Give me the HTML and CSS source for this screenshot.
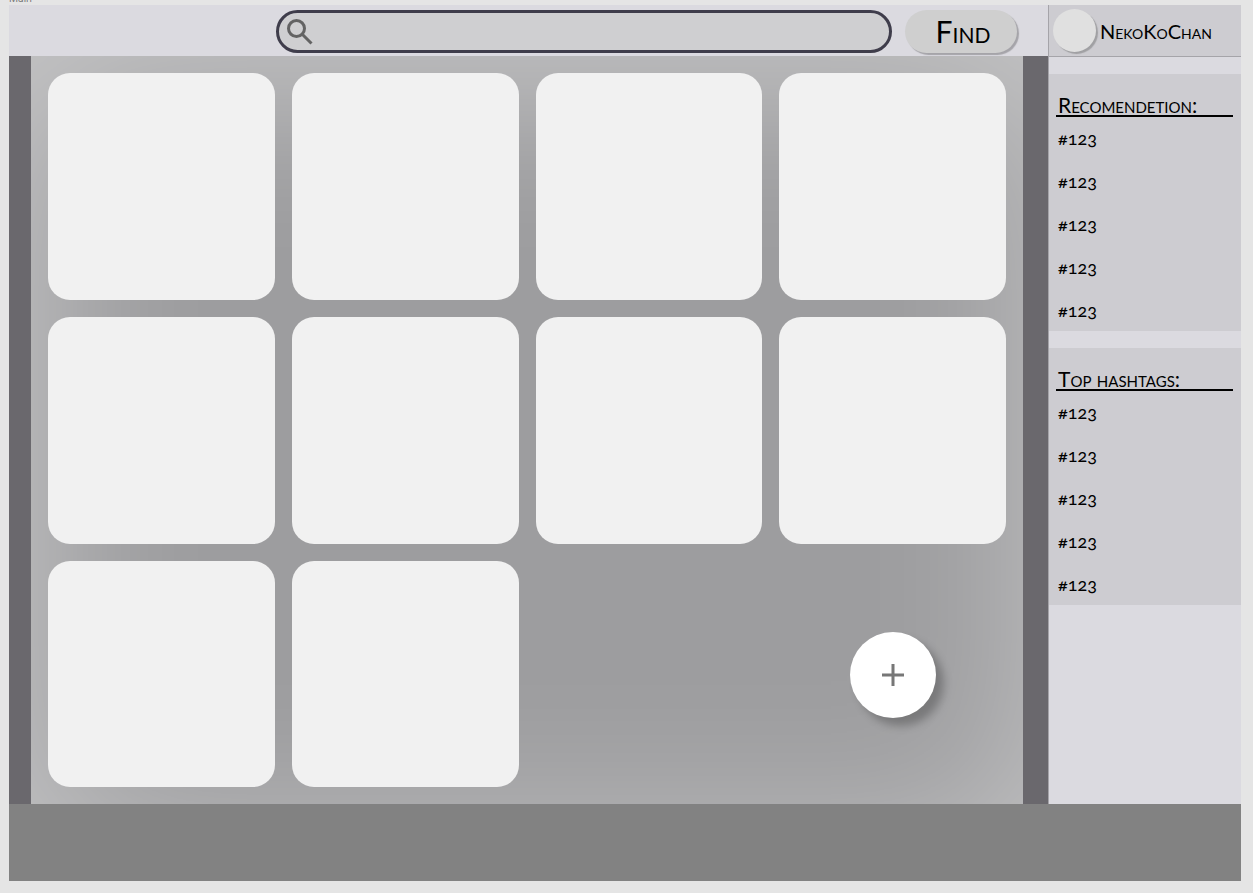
FILE: index.html
```html
<!DOCTYPE html>
<html lang="en">
<head>
<meta charset="utf-8">
<meta name="viewport" content="width=device-width, initial-scale=1">
<title>Main</title>
<link rel="stylesheet" href="styles.css">
</head>
<body>
<span class="frame-label">Main</span>
<div class="frame">
  <div class="layout">
    <div class="main-column">
      <header class="topbar">
        <form class="search" role="search">
          <label class="search-box" aria-label="Search">
            <svg class="search-icon" viewBox="0 0 26 26" aria-hidden="true"><circle cx="9.500" cy="9.500" r="8" /><path d="M15 15L24.500 24.500" /></svg>
            <input class="search-input" type="search" name="q">
          </label>
          <button class="find" type="submit">Find</button>
        </form>
      </header>
      <main class="board">
        <div class="grid">
          <article class="card"></article>
          <article class="card"></article>
          <article class="card"></article>
          <article class="card"></article>
          <article class="card"></article>
          <article class="card"></article>
          <article class="card"></article>
          <article class="card"></article>
          <article class="card"></article>
          <article class="card"></article>
        </div>
        <button class="add" type="button" aria-label="Add"><svg class="add-icon" viewBox="0 0 22 22" aria-hidden="true"><path d="M11 0V22M0 11H22" /></svg></button>
      </main>
    </div>
    <aside class="sidebar">
      <div class="profile"><span class="avatar"></span><span class="name">NekoKoChan</span></div>
      <section class="panel">
        <h2 class="panel-title">Recomendetion:</h2>
        <ul class="tags">
          <li><a href="#">#123</a></li>
          <li><a href="#">#123</a></li>
          <li><a href="#">#123</a></li>
          <li><a href="#">#123</a></li>
          <li><a href="#">#123</a></li>
        </ul>
      </section>
      <section class="panel">
        <h2 class="panel-title">Top hashtags:</h2>
        <ul class="tags">
          <li><a href="#">#123</a></li>
          <li><a href="#">#123</a></li>
          <li><a href="#">#123</a></li>
          <li><a href="#">#123</a></li>
          <li><a href="#">#123</a></li>
        </ul>
      </section>
    </aside>
  </div>
  <footer class="footer"></footer>
</div>
</body>
</html>
```
FILE: styles.css
```css
* { box-sizing: border-box; }

body {
  margin: 0;
  padding: 5px 12px 12px 9px;
  background: #e5e5e5;
  color: #000;
  font-family: Lato, "Open Sans", sans-serif;
  font-variant-caps: small-caps;
  font-variant-numeric: oldstyle-nums;
}

.frame-label {
  position: absolute;
  top: -8px;
  left: 9px;
  color: #777;
  font-family: Inter, sans-serif;
  font-size: 10px;
  line-height: 12px;
  font-variant-caps: normal;
}

.layout {
  display: grid;
  grid-template-columns: minmax(0, 1fr) 193px;
}

.main-column { background: #dbdae0; }

.topbar {
  height: 51px;
  padding: 5px 31px 3px 267px;
}

.search {
  display: flex;
  align-items: flex-start;
  gap: 13px;
}

.search-box {
  display: flex;
  flex: 1;
  align-items: center;
  gap: 8px;
  height: 43px;
  padding: 0 16px 0 8px;
  border: 3px solid #3f3d4b;
  border-radius: 22px;
  background: #cfcfd1;
}

.search-icon {
  width: 26px;
  height: 26px;
  fill: none;
  stroke: #636363;
  stroke-width: 3;
}

.search-input {
  flex: 1;
  min-width: 0;
  border: 0;
  outline: 0;
  background: transparent;
  font: inherit;
  font-size: 20px;
}

.find {
  width: 112px;
  height: 43px;
  padding: 0 0 2px 4px;
  border: 0;
  border-radius: 22px;
  background: #cfcfcf;
  box-shadow: 2px 2px 1px #a5a4a9;
  color: #000;
  font: inherit;
  font-size: 30px;
  line-height: 36px;
}

.board {
  position: relative;
  padding: 17px;
  border: solid #6a686d;
  border-width: 0 25px 0 22px;
  background: #9d9d9f;
  box-shadow: inset 12px 36px 170px rgba(255, 255, 255, .42);
}

.grid {
  display: grid;
  grid-template-columns: repeat(4, minmax(0, 1fr));
  gap: 17px;
}

.card {
  aspect-ratio: 1;
  border-radius: 22px;
  background: #f1f1f1;
}

.add {
  position: absolute;
  right: 87px;
  bottom: 86px;
  display: grid;
  place-items: center;
  width: 86px;
  height: 86px;
  padding: 0;
  border: 0;
  border-radius: 50%;
  background: #fff;
  box-shadow: 8px 8px 8px rgba(0, 0, 0, .25);
}

.add-icon {
  width: 22px;
  height: 22px;
  fill: none;
  stroke: #777;
  stroke-width: 3;
}

.sidebar {
  display: flex;
  flex-direction: column;
  gap: 17px;
  border-left: 1px solid #a5a4a9;
  background: #dbdae0;
}

.profile {
  display: flex;
  align-items: center;
  gap: 4px;
  height: 52px;
  padding-left: 4px;
  border-bottom: 1px solid #a5a4a9;
  background: #cdccd1;
  font-size: 20px;
  line-height: 24px;
}

.avatar {
  width: 43px;
  height: 43px;
  border-radius: 50%;
  background: #e0e0e0;
  box-shadow: 2px 2px 1px #a0a0a3;
}

.panel {
  height: 257px;
  padding: 20px 8px 0 7px;
  background: #cdccd1;
}

.panel-title {
  margin: 0;
  padding-left: 2px;
  border-bottom: 2px solid #000;
  font-size: 21px;
  font-weight: 400;
  line-height: 21px;
}

.tags {
  margin: 0;
  padding: 0 2px;
  list-style: none;
  font-size: 18px;
  line-height: 43px;
}

.tags a {
  color: inherit;
  text-decoration: none;
}

.footer {
  height: 77px;
  background: #828282;
}
```
